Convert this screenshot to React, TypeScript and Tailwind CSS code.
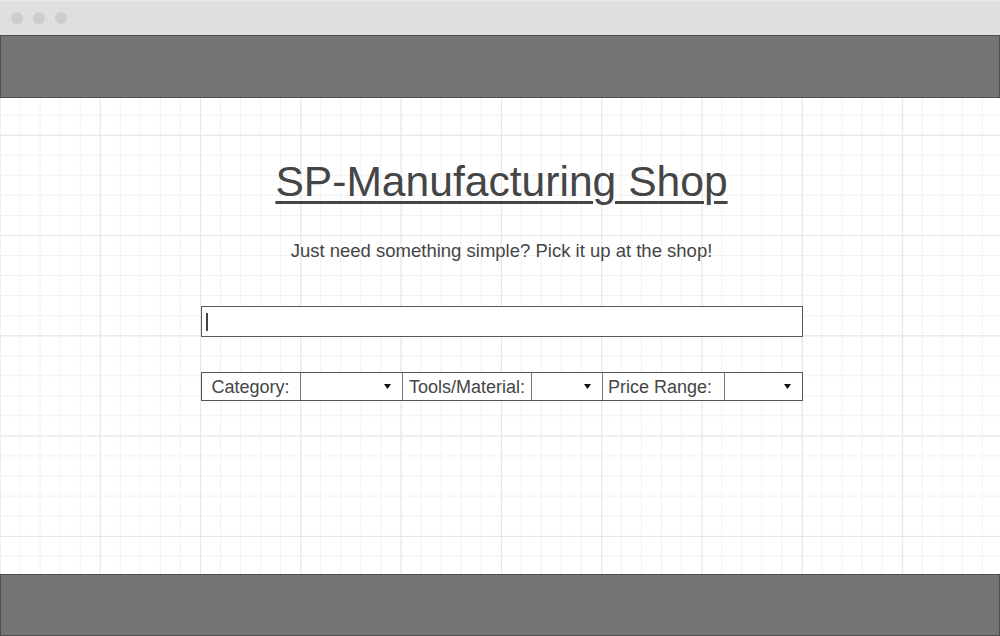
import React from "react";

function Select({ w }: { w: string }) {
  return (
    <div className={`${w} h-full border-l border-[#777] bg-white flex items-center justify-end pr-[11px]`}>
      <svg width="7" height="5" viewBox="0 0 7 5">
        <polygon points="0,0 7,0 3.5,5" fill="#111" />
      </svg>
    </div>
  );
}

export default function App() {
  return (
    <div className="w-[1000px] h-[636px] overflow-hidden bg-white font-['Liberation_Sans',Arial,sans-serif] text-[#454545]">
      {/* window title bar */}
      <div className="h-[35px] bg-[#dfdfdf] flex items-center gap-[10px] pl-[11px] border-t border-[#e9e9e9]">
        <div className="w-3 h-3 rounded-full bg-[#cdcdcd]" />
        <div className="w-3 h-3 rounded-full bg-[#cdcdcd]" />
        <div className="w-3 h-3 rounded-full bg-[#cdcdcd]" />
      </div>

      <div className="h-[601px] flex flex-col bg-white bg-[linear-gradient(to_right,#e6e6e6_1px,transparent_1px),linear-gradient(to_bottom,#e6e6e6_1px,transparent_1px),linear-gradient(to_right,#f1f1f1_1px,transparent_1px),linear-gradient(to_bottom,#f1f1f1_1px,transparent_1px)] bg-[size:100.3px_100.3px,100.3px_100.3px,20.06px_20.06px,20.06px_20.06px] bg-[position:-0.5px_0,0_-0.5px,-0.5px_0,0_-0.5px]">
        {/* header */}
        <div className="h-[63px] shrink-0 bg-[#757575] border border-[#4d4d4d]" />

        {/* content */}
        <div className="h-[476px] shrink-0 flex flex-col items-center pt-[62px]">
          <h1 className="text-[42.6px] leading-[42px] underline decoration-[3px] underline-offset-[5px] decoration-[#454545] pl-[3px]">
            SP-Manufacturing Shop
          </h1>
          <p className="mt-[39px] text-[18.5px] leading-[19px] pl-[3px]">
            Just need something simple? Pick it up at the shop!
          </p>

          <div className="mt-[46px] ml-[4px] w-[602px] h-[31px] border border-[#5a5a5a] bg-white flex items-center pl-[4px]">
            <div className="w-[2px] h-[18px] bg-[#444]" />
          </div>

          <div className="mt-[35px] ml-[4px] w-[602px] h-[29px] border border-[#555] bg-white flex text-[18px]">
            <div className="w-[98px] h-full flex items-center justify-center pt-[1px] pr-[1px]">Category:</div>
            <Select w="w-[102px]" />
            <div className="w-[129px] h-full border-l border-[#777] flex items-center justify-center pt-[1px]">
              Tools/Material:
            </div>
            <Select w="w-[71px]" />
            <div className="w-[122px] h-full border-l border-[#777] flex items-center pl-[5px] pt-[1px]">
              Price Range:
            </div>
            <Select w="flex-1" />
          </div>
        </div>

        {/* footer */}
        <div className="h-[62px] shrink-0 bg-[#757575] border border-[#4d4d4d]" />
      </div>
    </div>
  );
}
